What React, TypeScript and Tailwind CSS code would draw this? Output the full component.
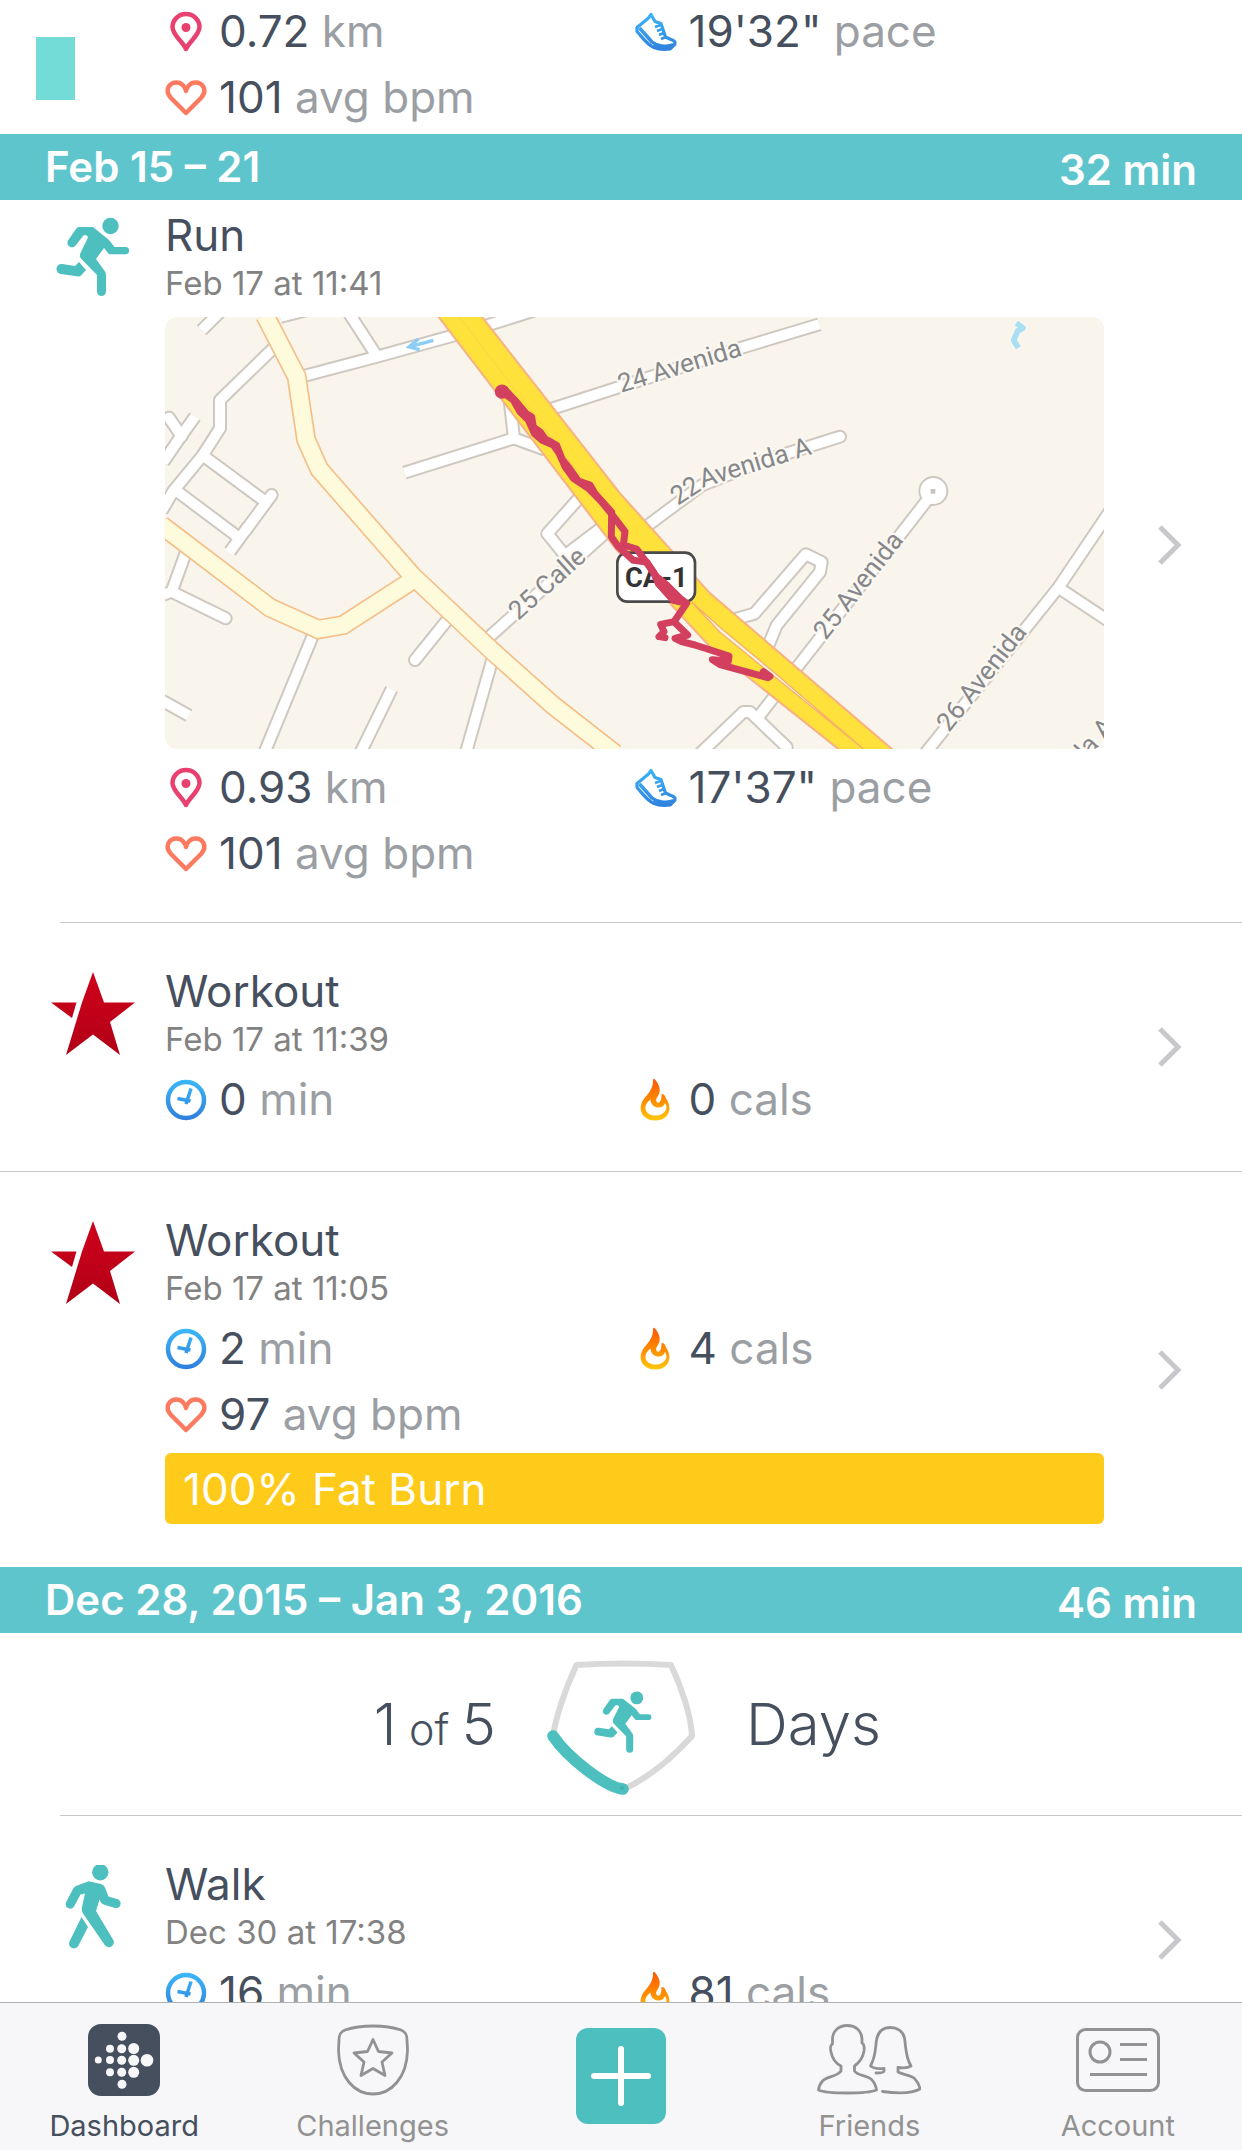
import type { ReactNode } from "react";

type StatKind = "distance" | "pace" | "heart" | "time" | "cals";

interface Stat {
  kind: StatKind;
  value: string;
  unit: string;
}

function IconGradients() {
  return (
    <svg width="0" height="0" className="absolute" aria-hidden="true">
      <defs>
        <linearGradient id="blue" gradientUnits="userSpaceOnUse" x1="0" y1="0" x2="0" y2="42">
          <stop offset="0" stopColor="#3cbafa" />
          <stop offset="1" stopColor="#2f7fdc" />
        </linearGradient>
        <linearGradient id="fire" gradientUnits="userSpaceOnUse" x1="0" y1="0" x2="0" y2="42">
          <stop offset="0" stopColor="#fb5607" />
          <stop offset="0.55" stopColor="#ff8c00" />
          <stop offset="1" stopColor="#ffc60b" />
        </linearGradient>
        <linearGradient id="red" gradientUnits="userSpaceOnUse" x1="0" y1="0" x2="0" y2="84">
          <stop offset="0" stopColor="#d0021b" />
          <stop offset="1" stopColor="#b00016" />
        </linearGradient>
      </defs>
    </svg>
  );
}

function StatIcon({ kind }: { kind: StatKind }) {
  return (
    <svg viewBox="0 0 42 42" className="size-[42px] shrink-0 overflow-visible" fill="none" aria-hidden="true">
      {kind === "distance" && (
        <>
          <path d="M21 39C18 32 7.500 25 7.500 17A13.500 13 0 0 1 34.500 17C34.500 25 24 32 21 39Z" stroke="#e8416f" strokeWidth="4.500" strokeLinejoin="round" />
          <circle cx="21" cy="17.500" r="4.500" fill="#e8416f" />
        </>
      )}
      {kind === "heart" && (
        <path d="M21 37L6 22C-1.500 13.500 5 6.500 11.500 6.500C17 6.500 20 11 21 15C22 11 25 6.500 30.500 6.500C37 6.500 43.500 13.500 36 22Z" stroke="#fb7a60" strokeWidth="4.500" strokeLinejoin="round" />
      )}
      {kind === "time" && (
        <g stroke="url(#blue)">
          <circle cx="21" cy="22" r="18" strokeWidth="4.500" />
          <path d="M26 10.500L21 26M12.500 20.500L25.500 23" strokeWidth="3.500" />
        </g>
      )}
      {kind === "cals" && (
        <>
          <path d="M19.500 1C26 8 26 14.500 22 19.500C20 23 22 25.500 24 24.500C26.500 23 26.500 19 26.500 16C29 16 30.500 18 31 20.500C38 30 34 42.500 20.500 42.500C6 42.500 1.500 29 10 19.500C15 14 18 9 18 3C18 1.500 18.500 .5 19.500 1Z" fill="url(#fire)" />
          <path d="M15.500 21.500C7 27.500 9.500 37.500 20.500 37.500C31 37.500 33.500 29 30 25C28 32 16 31 15.500 21.500Z" fill="#fff" />
        </>
      )}
      {kind === "pace" && (
        <g stroke="url(#blue)" strokeLinejoin="round">
          <path d="M16 4.500L13.500 8L2 17.500V21.500C8 28 12 34.500 19 37.500C25 40 31 39.500 35 39L40 34C41 32 39 30.500 36 29.500L30.500 27L26 13.500L20 11.500Z" strokeWidth="3.200" />
          <path d="M4.500 18L17 32C22 36 31 37.500 38 35" strokeWidth="3.500" />
          <path d="M19 35C24 37.500 31 37 39 34L35 39H26Z" fill="url(#blue)" strokeWidth="1.500" />
          <path d="M20 17L27 14.500M22 21L28.500 18.500M24 25L30 22.500M26 29L31 27" strokeWidth="2.500" />
        </g>
      )}
    </svg>
  );
}

function Runner({ className }: { className: string }) {
  return (
    <svg viewBox="0 0 84 84" className={className} fill="#4dbfbf" aria-hidden="true">
      <circle cx="59.500" cy="10" r="8.200" />
      <path d="M28 11H42L58 24L63.500 31H74.500a3.600 3.600 0 0 1 0 7.200H58L53 32L45 43L54 55.500Q55 57 55 59V75.500a4.500 4.500 0 0 1 -9 0V59L30 42.500Q28 40 29.500 37L37 21.500Q35.500 17.500 32 20L25 29a4.500 4.500 0 0 1 -8 -4.500L25 13Q26 11 28 11Z" />
      <path d="M28 46L35 54L30 59.500Q28.500 60.700 26 60.300L10 58a5 5 0 0 1 1 -10L24 50Z" />
    </svg>
  );
}

function Walker() {
  return (
    <svg viewBox="0 0 84 84" className="size-[84px]" fill="#4dbfbf" aria-hidden="true">
      <circle cx="49.300" cy="7.300" r="8.200" />
      <path d="M37.500 16.200L50 19Q53 20 54 22.500L57.500 31.500L66 34a4.500 4.500 0 0 1 -2 9L52.500 39.500Q49.500 38 48.500 34.500L45 46L62 74.500a4.800 4.800 0 0 1 -8.200 5.500L32 48.500Q30.500 46 31 42L34 28.500L29.500 29.500L23 41.500a4.500 4.500 0 0 1 -8 -4L22 24Q23 22 25 21Z" />
      <path d="M30.500 52L37 62L27.500 80.500a4.800 4.800 0 0 1 -9 -4Z" />
    </svg>
  );
}

function Star() {
  return (
    <svg viewBox="0 0 84 84" className="size-[84px]" fill="url(#red)" aria-hidden="true">
      <path d="M42 0L53 30.500H84L59 50L69 83L42 62.500L15 83L31 30.500Z" />
      <path d="M0 30.500H25.500L21 46Z" />
    </svg>
  );
}

const streets = [
  "M110 40L180 -30",
  "M325 94L165 249V334L113 415L25 522L-10 582",
  "M90 299L45 362L-5 435",
  "M113 415L300 553",
  "M35 522L222 662",
  "M65 700L20 824L-10 835",
  "M450 940L297 1310",
  "M680 1116L585 1310",
  "M987 1010L902 1310",
  "M-10 1150L72 1196",
  "M405 180L640 118L900 46L1110 -20",
  "M553 -10L632 112",
  "M345 0L430 -22",
  "M718 467L1047 364L1140 398",
  "M1033 240L1047 364",
  "M1140 282L1720 95L1963 22",
  "M970 962L1330 640",
  "M1245 540L1147 650L1200 715L1310 632",
  "M1440 650L1450 624L1610 505L1800 430",
  "M2290 545L1780 1200",
  "M1690 912L1768 890L1922 712L1970 735L1965 765L1835 925L1800 1010",
  "M2840 575L2680 812L2280 1310",
  "M2680 812L2840 918",
  "M1605 1310L1735 1185H1755L1865 1290V1310",
];

const deadEnds = [
  "M12 302L50 358",
  "M320 534L242 640",
  "M20 824L182 904",
  "M850 905L750 1029",
  "M1800 430L2025 359",
];

const collectors = [
  "M300 -5L395 179L423 367L463 457L742 776L985 1005L1163 1164L1350 1310",
  "M-10 625L315 872L460 937L535 924L742 790",
];

function RouteMap() {
  return (
    <svg viewBox="0 0 2817 1296" className="block w-full rounded-xl bg-[#f9f4ec]" fill="none" role="img" aria-label="Route map">
      <g stroke="#cfc8c1" strokeWidth="42" strokeLinejoin="round">
        {streets.map((d) => <path key={d} d={d} />)}
        {deadEnds.map((d) => <path key={d} d={d} strokeLinecap="round" />)}
        <path d="M195 704L250 628" />
        <circle cx="2305" cy="522" r="24" />
      </g>
      <g stroke="#fff" strokeWidth="30" strokeLinejoin="round">
        {streets.map((d) => <path key={d} d={d} />)}
        {deadEnds.map((d) => <path key={d} d={d} strokeLinecap="round" />)}
        <path d="M193 706L250 628" />
        <circle cx="2305" cy="522" r="24" fill="#fff" />
      </g>
      <rect x="2297" y="516" width="14" height="14" fill="#c9c2bb" />
      <g stroke="#f5bf87" strokeWidth="60">
        {collectors.map((d) => <path key={d} d={d} />)}
      </g>
      <g stroke="#fdfbdc" strokeWidth="50">
        {collectors.map((d) => <path key={d} d={d} />)}
      </g>
      <path d="M815 -8L1355 699L1515 859L1635 989L2030 1304H2190L1635 829L1365 529L945 -8Z" fill="#ffe13c" stroke="#f8b183" strokeWidth="6" />
      <path d="M880 -5L1390 665" stroke="#fdd04a" strokeWidth="3" />
      <path d="M1580 855L1670 935L1820 1060L2095 1296L1808 1062L1664 945Z" fill="#fdf3e6" stroke="#f6b068" strokeWidth="4" />
      <path d="M805 70L738 88M760 66L732 90L764 98" stroke="#8bcdf5" strokeWidth="10" />
      <path d="M2554 18L2574 33L2558 42L2546 70L2560 92" stroke="#a8dff2" strokeWidth="17" strokeLinejoin="round" />

      <g fill="#85878a" stroke="#fbf7f1" strokeWidth="14" strokeLinejoin="round" paintOrder="stroke" fontFamily="Roboto, sans-serif" fontSize="78">
        <text transform="translate(1368 227) rotate(-17)">24 Avenida</text>
        <text transform="translate(1538 566) rotate(-33)">22</text>
        <text transform="translate(1612 512) rotate(-17)">Avenida A</text>
        <text transform="translate(1060 912) rotate(-42)">25 Calle</text>
        <text transform="translate(1982 972) rotate(-52)">25 Avenida</text>
        <text transform="translate(2352 1248) rotate(-52)">26 Avenida</text>
        <text transform="translate(2764 1330) rotate(-48)">la A</text>
      </g>

      <rect x="1357" y="707" width="233" height="147" rx="30" fill="#fff" stroke="#4a4a4a" strokeWidth="8" />
      <text x="1474" y="809" textAnchor="middle" fontFamily="Roboto, sans-serif" fontWeight="700" fontSize="82" fill="#333">CA-1</text>

      <g stroke="#d3405f" strokeWidth="21" strokeLinejoin="round" strokeLinecap="round">
        <circle cx="1011" cy="224" r="11" fill="#d3405f" />
        <path d="M1011 224L1045 249L1065 284L1090 309L1108 349L1130 369L1165 384L1183 409L1200 449L1225 484L1270 514L1305 549L1330 579L1350 604L1380 644L1375 684L1415 696L1440 730L1475 779L1505 804L1545 844L1565 859L1527 914L1487 922L1497 944L1482 959L1500 962" />
        <path d="M1020 218L1050 250L1084 290L1100 300L1105 330L1126 345L1140 365L1175 385L1190 425L1214 455L1240 492L1275 504L1290 530L1340 585L1339 659L1360 689L1405 730L1445 735L1465 765L1480 800L1525 850L1560 858" />
        <path d="M1527 914L1568 954L1530 964L1550 974L1590 984L1692 1017L1690 1032L1642 1028L1665 1043L1809 1082L1815 1078L1795 1064" />
      </g>
    </svg>
  );
}

function StatGrid({ stats }: { stats: Stat[] }) {
  return (
    <div className="grid grid-cols-2">
      {stats.map((s) => (
        <div key={s.kind} className="flex h-[66px] items-center gap-3">
          <StatIcon kind={s.kind} />
          <p className="text-[44px] leading-none text-[#9b9ea3]">
            <span className="text-[#464f5e]">{s.value}</span> {s.unit}
          </p>
        </div>
      ))}
    </div>
  );
}

function Chevron() {
  return (
    <svg viewBox="0 0 26 42" className="ml-[53px] h-[42px] w-[26px] shrink-0 self-center" fill="none" aria-hidden="true">
      <path d="M3 3L21 21L3 39" stroke="#c7c7cc" strokeWidth="5" />
    </svg>
  );
}

interface ActivityProps {
  icon: ReactNode;
  title: string;
  date: string;
  stats: Stat[];
  map?: ReactNode;
  zone?: string;
}

function Activity({ icon, title, date, stats, map, zone }: ActivityProps) {
  return (
    <a href="#activity" className="flex pr-[59px] pl-[51px]">
      <div className="mr-[30px] w-[84px] shrink-0 pt-[49px]">{icon}</div>
      <div className={`min-w-0 flex-1 pt-[42px] ${map ? "pb-9" : "pb-[39px]"}`}>
        <h3 className="text-[44px] leading-[52px] text-[#464f5e]">{title}</h3>
        <p className="text-[33px] leading-[44px] text-[#828282]">{date}</p>
        {map && <div className="mt-3">{map}</div>}
        <div className="mt-[5px]">
          <StatGrid stats={stats} />
        </div>
        {zone && (
          <div className="mt-1.5 mb-1 flex h-[71px] items-center rounded-md bg-[#ffcb1a] px-[18px] text-[44px] text-white">
            {zone}
          </div>
        )}
      </div>
      <Chevron />
    </a>
  );
}

function WeekHeader({ range, total }: { range: string; total: string }) {
  return (
    <header className="relative flex h-[66px] items-center justify-between bg-[#5ec5cc] px-[45px] pb-0.5 text-[42px] font-semibold text-white">
      <h2>{range}</h2>
      <p className="pt-1.5">{total}</p>
    </header>
  );
}

function WeekGoal() {
  return (
    <div className="grid h-[182px] grid-cols-[1fr_auto_1fr] items-center gap-[51px] text-[58px] font-light text-[#464f5e]">
      <p className="text-right">
        1 <span className="-mx-1 text-[43px]">of</span> 5
      </p>
      <div className="relative">
        <svg viewBox="0 -4 148 144" className="h-36 w-[148px]" fill="none" strokeLinecap="round" strokeLinejoin="round" aria-hidden="true">
          <path d="M6 80C10 55 19 32 29.500 9Q76 6 124 9C135 32 144 60 145 80C126 101 103 121 77 133" stroke="#d9d9d9" strokeWidth="6" />
          <path d="M6 80C20 101 58 131 76 133" stroke="#4dbfbf" strokeWidth="11.500" />
          <circle cx="75" cy="132" r="2" fill="#45aeb0" />
        </svg>
        <Runner className="absolute top-[38px] left-[43px] size-[66px]" />
      </div>
      <p>Days</p>
    </div>
  );
}

function Tab({ label, active, children }: { label: string; active?: boolean; children: ReactNode }) {
  return (
    <a
      href={"#" + label.toLowerCase()}
      className={`flex flex-col items-center gap-3 pt-[21px] ${active ? "text-[#464f5e]" : "text-[#929292]"}`}
    >
      <span className="flex h-[72px] items-center">{children}</span>
      <span className="text-[29px] leading-9">{label}</span>
    </a>
  );
}

const logoDots = [
  [34, 12.3, 4.5],
  [22, 24.7, 4], [33.7, 24.7, 4.5], [45.7, 24.5, 5.5],
  [10.3, 36, 3.5], [22, 36, 4], [33.7, 36.3, 4.5], [45.7, 36.3, 5.5], [59, 36.3, 6.3],
  [22, 48.3, 4], [33.7, 48.3, 4.5], [45.7, 48.3, 5.5],
  [34, 60.3, 4.5],
];

function TabBar() {
  return (
    <nav className="fixed inset-x-0 bottom-0 grid h-[148px] grid-cols-5 border-t border-[#b2b2b2] bg-[#f7f7f9]">
      <Tab label="Dashboard" active>
        <svg viewBox="0 0 72 72" className="size-[72px]" aria-hidden="true">
          <rect width="72" height="72" rx="13" fill="#464f5e" />
          {logoDots.map(([x, y, r]) => (
            <circle key={`${x}-${y}`} cx={x} cy={y} r={r} fill="#f7f7f9" />
          ))}
        </svg>
      </Tab>
      <Tab label="Challenges">
        <svg viewBox="0 0 72 72" className="size-[72px]" fill="none" stroke="#929292" strokeWidth="2.800" strokeLinejoin="round" aria-hidden="true">
          <path d="M36 2C48 2 58 4 64 6C69 8 70 11 70 16L70.500 26C70 54 54 70 36 70C18 70 2 54 1.500 26L2 16C2 11 3 8 8 6C14 4 24 2 36 2Z" />
          <path d="M36 15.500L41.500 27.500L55 29L45 38L48 51.500L36 44.500L24 51.500L27 38L17 29L30.500 27.500Z" />
        </svg>
      </Tab>
      <div className="flex justify-center pt-[25px]">
        <button type="button" aria-label="Add" className="flex h-24 w-[90px] items-center justify-center rounded-xl bg-[#4dbfbf]">
          <svg viewBox="0 0 60 60" className="size-[60px]" stroke="#fff" strokeWidth="6" strokeLinecap="round" aria-hidden="true">
            <path d="M30 3V57M3 30H57" />
          </svg>
        </button>
      </div>
      <Tab label="Friends">
        <svg viewBox="0 0 104 72" className="h-[72px] w-[104px]" fill="none" stroke="#929292" strokeWidth="2.800" strokeLinecap="round" strokeLinejoin="round" aria-hidden="true">
          <path d="M30 1.500C21 1.500 15.500 8 15.500 15V20C13 21 13.500 26 14 28C15 33 18 39 24 42V47C20 53 10 52 5.500 57Q2 61 1.500 66C10 70 50 70 59.500 66Q58.500 59 54 55C49 51 41 52 37.500 47V42C43 38 46 33 47 27C47.500 23 47 20 45 19V15C44.500 7 39 1.500 30 1.500Z" />
          <path d="M59 49C62 49 67 49 67 47V44.500C62 45 56 44 53.500 42C60 30 58 20 60 14C62 6 68 3.500 73.500 3.500C80 3.500 86 7 87.500 14C89 22 88 32 94 42C91 44 85 44 81 43.500V48C86 51 93 51 97 54Q102 59 103 65C94 70 77 69 65.500 67.500" />
        </svg>
      </Tab>
      <Tab label="Account">
        <svg viewBox="0 0 84 64" className="h-[64px] w-[84px]" fill="none" stroke="#929292" strokeWidth="3" aria-hidden="true">
          <rect x="1.500" y="1.500" width="81" height="61" rx="8" />
          <circle cx="24" cy="24" r="10" />
          <path d="M44 16.500H71M44 31.500H71M14 46.500H71" />
        </svg>
      </Tab>
    </nav>
  );
}

export default function App() {
  return (
    <div className="min-h-screen overflow-hidden bg-white font-[Inter,sans-serif]">
      <IconGradients />
      <main className="pb-20">
        <a href="#activity" className="-mt-0.5 flex pr-[138px] pb-1">
          <div className="w-[165px] shrink-0 pt-[39px] pl-9">
            <div className="h-[63px] w-[39px] bg-[#73dcd7]" />
          </div>
          <div className="flex-1">
            <StatGrid
              stats={[
                { kind: "distance", value: "0.72", unit: "km" },
                { kind: "pace", value: `19'32"`, unit: "pace" },
                { kind: "heart", value: "101", unit: "avg bpm" },
              ]}
            />
          </div>
        </a>

        <section>
          {/* the pinned header covers the top padding of the first row */}
          <div className="relative z-10">
            <WeekHeader range="Feb 15 – 21" total="32 min" />
          </div>
          <div className="-mt-[33px]">
            <Activity
              icon={<Runner className="size-[84px]" />}
              title="Run"
              date="Feb 17 at 11:41"
              map={<RouteMap />}
              stats={[
                { kind: "distance", value: "0.93", unit: "km" },
                { kind: "pace", value: `17'37"`, unit: "pace" },
                { kind: "heart", value: "101", unit: "avg bpm" },
              ]}
            />
          </div>
          <hr className="ml-[60px] border-[#c8c8cc]" />
          <Activity
            icon={<Star />}
            title="Workout"
            date="Feb 17 at 11:39"
            stats={[
              { kind: "time", value: "0", unit: "min" },
              { kind: "cals", value: "0", unit: "cals" },
            ]}
          />
          <hr className="border-[#c8c8cc]" />
          <Activity
            icon={<Star />}
            title="Workout"
            date="Feb 17 at 11:05"
            stats={[
              { kind: "time", value: "2", unit: "min" },
              { kind: "cals", value: "4", unit: "cals" },
              { kind: "heart", value: "97", unit: "avg bpm" },
            ]}
            zone="100% Fat Burn"
          />
        </section>

        <section>
          <WeekHeader range="Dec 28, 2015 – Jan 3, 2016" total="46 min" />
          <WeekGoal />
          <hr className="ml-[60px] border-[#c8c8cc]" />
          <Activity
            icon={<Walker />}
            title="Walk"
            date="Dec 30 at 17:38"
            stats={[
              { kind: "time", value: "16", unit: "min" },
              { kind: "cals", value: "81", unit: "cals" },
            ]}
          />
        </section>
      </main>
      <TabBar />
    </div>
  );
}
